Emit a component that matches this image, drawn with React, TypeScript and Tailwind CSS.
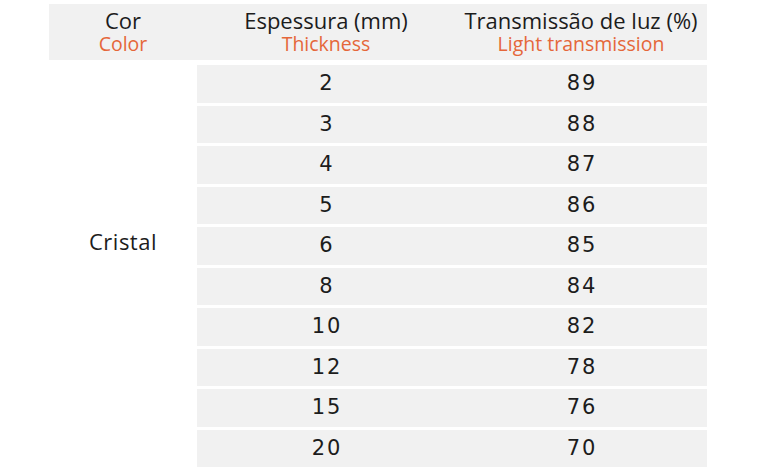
import React from "react";

const rows: [string, string][] = [
  ["2", "89"],
  ["3", "88"],
  ["4", "87"],
  ["5", "86"],
  ["6", "85"],
  ["8", "84"],
  ["10", "82"],
  ["12", "78"],
  ["15", "76"],
  ["20", "70"],
];

export default function App() {
  return (
    <div
      className="w-[767px] h-[474px] bg-white pl-[49px] pt-[4px] text-[#1c1c1c]"
      style={{ fontFamily: '"Open Sans", "DejaVu Sans", sans-serif' }}
    >
      <div className="flex w-[658px] h-[56px] bg-[#f1f1f1] leading-[24px]">
        <div className="w-[148px] flex flex-col items-center justify-center">
          <span className="text-[22px]">Cor</span>
          <span className="text-[19.5px] text-[#e5673a]">Color</span>
        </div>
        <div className="w-[258px] flex flex-col items-center justify-center">
          <span className="text-[22px]">Espessura (mm)</span>
          <span className="text-[19.5px] text-[#e5673a]">Thickness</span>
        </div>
        <div className="w-[252px] flex flex-col items-center justify-center">
          <span className="text-[22px]">Transmissão de luz (%)</span>
          <span className="text-[19.5px] text-[#e5673a]">Light transmission</span>
        </div>
      </div>
      <div className="flex mt-[5px]">
        <div className="w-[148px] flex items-center justify-center pb-[50px]">
          <span className="text-[22px] tracking-[0.5px]">Cristal</span>
        </div>
        <div className="flex flex-col gap-[3px]">
          {rows.map(([a, b]) => (
            <div
              key={a}
              className="flex w-[510px] h-[37.5px] bg-[#f1f1f1] items-center text-[21px] tracking-[2px]"
              style={{ fontFamily: '"DejaVu Sans", sans-serif' }}
            >
              <div className="w-[258px] text-center pl-[2px]">{a}</div>
              <div className="w-[252px] text-center pl-[2px]">{b}</div>
            </div>
          ))}
        </div>
      </div>
    </div>
  );
}
